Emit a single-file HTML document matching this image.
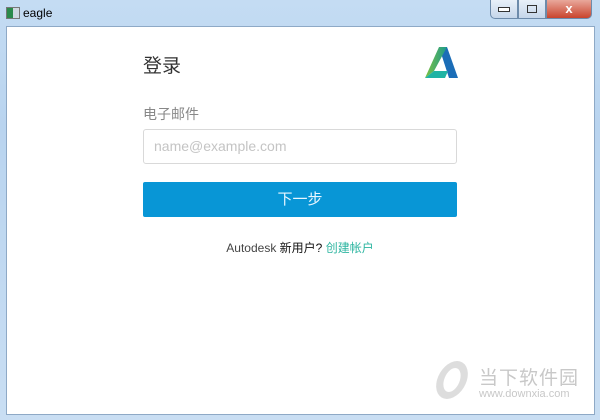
<!DOCTYPE html><html><head><meta charset="utf-8"><style>
body{margin:0;width:600px;height:420px;overflow:hidden;background:linear-gradient(#c4dcf3,#b9d4ef 30%,#c9def3);font-family:"Liberation Sans","Noto Sans CJK SC",sans-serif;position:relative}
.win{position:absolute;left:6px;top:26px;width:587px;height:387px;background:#fff;border:1px solid #8ea9c6}
.t{position:absolute;font-size:12px;color:#000}
.btns{position:absolute;top:0;right:8px;height:19px;display:flex}
.b{width:26px;height:18px;border:1px solid #6d8bab;background:linear-gradient(#e8f0f9,#c5d6ea);border-top:none}
.x{width:44px;background:linear-gradient(#e9a89b,#c9442d);border-radius:0 0 5px 0}
</style></head><body>
<div style="position:absolute;left:6px;top:7px;width:12px;height:10px;background:linear-gradient(90deg,#2b8a4a 50%,#cfd8e0 50%);border:1px solid #777"></div>
<div class="t" style="left:23px;top:6px">eagle</div>
<div class="btns"><div class="b" style="border-radius:0 0 0 5px;display:flex;align-items:center;justify-content:center"><div style="width:10px;height:3px;border:1px solid #333;background:#fff"></div></div><div class="b" style="display:flex;align-items:center;justify-content:center"><div style="width:8px;height:6px;border:1px solid #333"></div></div><div class="b x" style="color:#fff;font-weight:bold;text-align:center;font-size:13px;line-height:17px">x</div></div>
<div class="win"></div>
<div style="position:absolute;left:143px;top:51px;font-size:19px;color:#333">登录</div>
<svg style="position:absolute;left:425px;top:47px" width="33" height="32" viewBox="0 0 33 32"><defs><linearGradient id="g" x1="0" y1="0" x2="1" y2="0"><stop offset="0" stop-color="#7cc142"/><stop offset="1" stop-color="#1d9a8d"/></linearGradient></defs><polygon points="14,0 22,0 33,31 24,31" fill="#1b6db7"/><polygon points="14,0 22,0 9,24 0,31" fill="url(#g)"/><polygon points="0,31 9,24 23,24 20,31" fill="#1fb3a4"/></svg>
<div style="position:absolute;left:143px;top:104px;font-size:14px;color:#888">电子邮件</div>
<div style="position:absolute;left:143px;top:129px;height:33px;border:1px solid #d9d9d9;border-radius:3px;font-size:14px;color:#c4c4c4;line-height:33px;padding-left:10px;width:302px">name@example.com</div>
<div style="position:absolute;left:143px;top:182px;width:314px;height:35px;background:#0896d6;border-radius:2px;color:#e8f6ff;font-size:15px;text-align:center;line-height:35px">下一步</div>
<div style="position:absolute;left:0;width:600px;top:239px;text-align:center;font-size:12px;color:#444">Autodesk <span style="color:#111">新用户?</span> <span style="color:#2cb5a0">创建帐户</span></div>
<div style="position:absolute;left:437px;top:361px;width:30px;height:38px;border-radius:50%;border:7px solid #ddd;box-sizing:border-box;transform:skew(-15deg)"></div>
<div style="position:absolute;left:479px;top:363px;font-size:19px;color:#c8c8c8;letter-spacing:1px">当下软件园</div>
<div style="position:absolute;left:479px;top:388px;font-size:11px;color:#c8c8c8">www.downxia.com</div>
</body></html>
